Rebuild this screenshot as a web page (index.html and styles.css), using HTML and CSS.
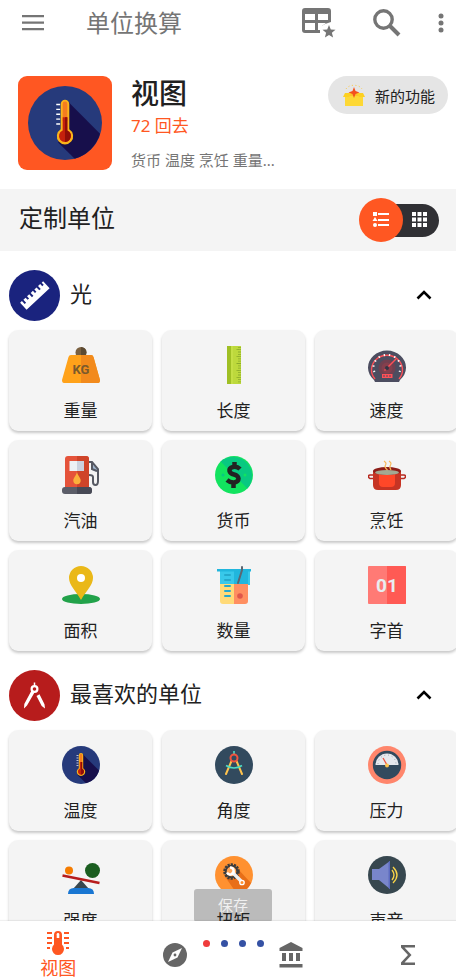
FILE: index.html
```html
<!DOCTYPE html>
<html lang="zh-CN">

<head>
  <meta charset="UTF-8">
  <meta name="viewport" content="width=device-width, initial-scale=1.0">
  <title>单位换算</title>
  <link rel="stylesheet" href="styles.css">
</head>

<body>

  <div class="app">
    <header class="topbar">
      <button class="icon-btn menu-btn" aria-label="菜单">
        <svg width="22" height="16" viewBox="0 0 22 16" fill="#757575"><path d="M0 0h22v2.300H0zM0 6.500h22v2.300H0zM0 13h22v2.300H0z"/></svg>
      </button>
      <h1>单位换算</h1>
      <button class="icon-btn" aria-label="收藏表格">
        <svg width="34" height="32" viewBox="0 0 34 32">
          <path fill="#757575" fill-rule="evenodd" d="M3 1h23a3 3 0 0 1 3 3v11l-6 2-5 3v6H3a3 3 0 0 1-3-3V4a3 3 0 0 1 3-3zM3 7v6h10V7zM16 7v6h10V7zM3 16v7h10v-7z"/>
          <path fill="#fff" d="M16 16h8l-4 3-1 4h-3z"/>
          <path fill="#757575" d="M27 18l1.800 4.500 4.700.3-3.600 3 1.200 4.700-4.100-2.600-4.100 2.600 1.200-4.700-3.600-3 4.700-.3z"/>
        </svg>
      </button>
      <button class="icon-btn" aria-label="搜索">
        <svg width="28" height="28" viewBox="0 0 28 28" fill="none" stroke="#757575"><circle cx="10.500" cy="10.500" r="8.700" stroke-width="3.400"/><path d="M17 17l9 9" stroke-width="4"/></svg>
      </button>
      <button class="icon-btn" aria-label="更多">
        <svg width="6" height="22" viewBox="0 0 6 22" fill="#757575"><circle cx="3" cy="4" r="2.500"/><circle cx="3" cy="11" r="2.500"/><circle cx="3" cy="18" r="2.500"/></svg>
      </button>
    </header>

    <main class="content">
      <section class="hero">
        <div class="hero-icon">
          <svg width="74" height="74" viewBox="0 0 38 38"><use href="#thermo"/></svg>
        </div>
        <div class="hero-text">
          <h2>视图</h2>
          <p class="count">72 回去</p>
          <p class="summary">货币 温度 烹饪 重量...</p>
        </div>
        <button class="new-btn">
          <svg width="22" height="22" viewBox="0 0 22 22">
            <path fill="#fdd835" d="M2 9h18v13H2z"/><path fill="#fbc02d" d="M2 9h18l-2 3H4z"/>
            <path fill="#fdd020" d="M2 9l-2 4h6l3-4zM20 9l2 4h-6l-3-4z"/>
            <path fill="#f4511e" d="M11 3l1.500 4 4 1.500-4 1.500-1.500 4-1.500-4-4-1.500 4-1.500z"/>
            <path stroke="#f9c846" stroke-dasharray="1 2.500" fill="none" d="M3 5c3-5 13-5 16 0"/>
          </svg>
          新的功能
        </button>
      </section>

      <section class="custom">
        <h2>定制单位</h2>
        <div class="toggle">
          <button class="toggle-list" aria-label="列表">
            <svg width="18" height="16" viewBox="0 0 18 16" fill="#fff"><path d="M1 0h4v4H1zM6 1h11v2H6zM6 7h11v2H6zM6 12h11v2H6zM3 5l2.500 4h-5z"/><circle cx="3" cy="13" r="2"/></svg>
          </button>
          <button class="toggle-grid" aria-label="网格">
            <svg width="16" height="16" viewBox="0 0 16 16" fill="#fff"><path d="M0 0h4v4H0zM5.500 0h4v4h-4zM11 0h4v4h-4zM0 5.500h4v4H0zM5.500 5.500h4v4h-4zM11 5.500h4v4h-4zM0 11h4v4H0zM5.500 11h4v4h-4zM11 11h4v4h-4z"/></svg>
          </button>
        </div>
      </section>

      <!-- 光 -->
      <section class="group">
        <div class="group-head">
          <svg class="group-icon" viewBox="0 0 51 51">
            <circle cx="25.500" cy="25.500" r="25.500" fill="#1a237e"/>
            <g transform="rotate(-43 25.500 25.500)"><path fill="#fff" d="M10 21h2.500v4h2v-4h3v3h2v-3h3v4h2v-4h3v3h2v-3h3v4h2v-4h3v3h2v-3h2v9.500H10z"/></g>
          </svg>
          <h3>光</h3>
          <button class="icon-btn" aria-label="收起">
            <svg width="16" height="12" viewBox="0 0 16 12" fill="none" stroke="#000" stroke-width="2.600"><path d="M1.500 8.500L8 2l6.500 6.500"/></svg>
          </button>
        </div>
        <div class="cards">
          <button class="card">
            <svg viewBox="0 0 38 38">
              <circle cx="19" cy="6.500" r="5.500" fill="#7a6040"/><path fill="#5c4a32" d="M19 1a5.500 5.500 0 0 1 0 11z"/>
              <path fill="#ffa21a" d="M9 9h20q2 0 2.500 2L38 34q0 3-2 3H2q-2 0-2-3L6.500 11Q7 9 9 9z"/>
              <path fill="#f28a1c" d="M19 9h10q2 0 2.500 2L38 34q0 3-2 3H19z"/>
              <text class="kg" x="19" y="28">KG</text>
            </svg>
            <span>重量</span>
          </button>
          <button class="card">
            <svg viewBox="0 0 38 38">
              <path fill="#bdd93c" d="M12 0h14v38H12z"/><path fill="#9fbf24" d="M12 0h4v38h-4z"/><path fill="#c5df46" d="M16 0h2v38h-2z"/>
              <path stroke="#8bab2a" stroke-width="3" stroke-dasharray=".8 1.500" d="M24.500 1v36"/>
              <path stroke="#8bab2a" stroke-width="2" stroke-dasharray=".8 6.100" d="M22.500 3.300v34"/>
            </svg>
            <span>长度</span>
          </button>
          <button class="card">
            <svg viewBox="0 0 38 38">
              <path fill="#4c4d60" d="M6 34A19 17 0 1 1 32 34L31 36H7z"/>
              <path fill="none" stroke="#ff5057" stroke-width="1.400" d="M7 33A15.500 14.500 0 1 1 31 33"/>
              <path fill="none" stroke="#fff" stroke-width="2" stroke-dasharray="1.400 4" d="M6.500 26A13.500 12.500 0 1 1 31.500 26"/>
              <circle cx="19" cy="22" r="8.500" fill="#704050"/><circle cx="19" cy="22" r="5.500" fill="#853f4d"/>
              <path stroke="#ff5057" stroke-width="1.500" d="M16.500 24.500L28 13"/><circle cx="19" cy="22" r="2" fill="#333544"/>
              <path fill="#ff5057" d="M14 28h10.500v4H14z"/><path stroke="#4c4d60" d="M16 29v2M19 29v2M22 29v2"/>
            </svg>
            <span>速度</span>
          </button>
          <button class="card">
            <svg viewBox="0 0 38 38">
              <path fill="#e5533a" d="M3 32V3q0-3 3-3h18q3 0 3 3v29z"/><path fill="#cf4429" d="M15 0h9q3 0 3 3v29H15z"/>
              <path fill="#edf1f5" d="M7.500 5H22v10H7.500z"/><path fill="#cbd2df" d="M15 5h7v10h-7z"/>
              <path fill="#fbb03b" d="M15 16c1 4 3.700 6 3.700 8.500a3.700 3.700 0 0 1-7.400 0C11.300 22 14 20 15 16z"/>
              <rect y="31" width="30" height="7" rx="3" fill="#5b5d68"/><path fill="#474955" d="M15 31h12q3 0 3 3.500T27 38H15z"/>
              <path fill="#9fb4cc" d="M30 8l5 4v4l-5-2z"/>
              <path fill="none" stroke="#565963" stroke-width="2" d="M27 6h3l6 7v12q0 4-2.500 4T31 26v-5q0-2-4-2M30 7v6l5 2"/>
            </svg>
            <span>汽油</span>
          </button>
          <button class="card">
            <svg viewBox="0 0 38 38">
              <circle cx="19" cy="19" r="19" fill="#12e35f"/><path fill="#08c981" d="M5.600 5.600A19 19 0 0 1 32.400 32.400z"/>
              <circle cx="8" cy="19" r="1.500" fill="#08c981"/><circle cx="30" cy="19" r="1.500" fill="#12e35f"/>
              <path stroke="#222" stroke-width="4.500" fill="none" d="M25 13q-3-3-7-2-4 1-3.500 4 .5 2.500 4.500 3.500t4.500 4q0 3-4 4-4 .5-7.500-2.500M19.500 6v6M18.500 26v6"/>
            </svg>
            <span>货币</span>
          </button>
          <button class="card">
            <svg viewBox="0 0 38 38">
              <path fill="none" stroke="#b62a20" stroke-width="1.500" d="M6 19H2q-1.500 0-1.500 1.500T2 22.500h4M32 19h4q1.500 0 1.500 1.500T36 22.500h-4"/>
              <path fill="#c63424" d="M5 15h28v14q0 5-5 5H10q-5 0-5-5z"/><path fill="#ff4728" d="M11 18h16v9q0 4-4 4h-8q-4 0-4-4z"/>
              <ellipse cx="19" cy="15" rx="14" ry="4" fill="#8c1d17"/><ellipse cx="19" cy="16.500" rx="12" ry="2.500" fill="#a3a992"/>
              <path fill="none" stroke="#f9b858" stroke-width="1.200" d="M16 5q3 2 1.500 4t2 5M21 5q3 2 1.500 4t.5 5"/>
            </svg>
            <span>烹饪</span>
          </button>
          <button class="card">
            <svg viewBox="0 0 38 38">
              <ellipse cx="19" cy="33" rx="19" ry="5" fill="#22a24a"/>
              <path fill="#eab818" d="M19 34C14 25 7 19 7 12a12 12 0 0 1 24 0c0 7-7 13-12 22z"/>
              <circle cx="19" cy="12" r="4" fill="#fff"/>
            </svg>
            <span>面积</span>
          </button>
          <button class="card">
            <svg viewBox="0 0 38 38">
              <path fill="#38c8ea" d="M3 3h32v16H5V5H3z"/><path fill="#21b6dd" d="M19 3h14v16H19z"/><path fill="#21b6dd" d="M2 3h34v2.500H2z"/>
              <path fill="#ffda78" d="M5 18h14v20H8q-3 0-3-3z"/><path fill="#ff8f61" d="M19 18h14v17q0 3-3 3H19z"/>
              <path stroke="#25a9cc" stroke-width="2" stroke-linecap="round" d="M10 9h5M10 14h5M10 20h5M10 25h5M10 30h5"/>
              <path stroke="#5c6672" stroke-width="2" stroke-linecap="round" fill="none" d="M27 1v3l-4 13"/><circle cx="25" cy="30" r="2.800" fill="#e0574a"/>
            </svg>
            <span>数量</span>
          </button>
          <button class="card">
            <svg viewBox="0 0 38 38">
              <rect width="38" height="38" rx="1" fill="#ff7a75"/><path fill="#ff5a54" d="M19 0h18q1 0 1 1v36q0 1-1 1H19z"/>
              <text class="zero-one" x="19" y="26">01</text>
            </svg>
            <span>字首</span>
          </button>
        </div>
      </section>

      <!-- 最喜欢的单位 -->
      <section class="group">
        <div class="group-head">
          <svg class="group-icon" viewBox="0 0 51 51">
            <circle cx="25.500" cy="25.500" r="25.500" fill="#b71c1c"/>
            <circle cx="25.500" cy="19" r="2.900" fill="none" stroke="#fff" stroke-width="2.200"/>
            <path stroke="#fff" stroke-width="1.500" d="M25.500 12.500v4"/>
            <path fill="#fff" d="M22.500 20.500l3 2-7.500 13-3 3 .3-4.500zM27.500 26l3-1.700 5 10 .5 4.200-3.300-2.500z"/>
          </svg>
          <h3>最喜欢的单位</h3>
          <button class="icon-btn" aria-label="收起">
            <svg width="16" height="12" viewBox="0 0 16 12" fill="none" stroke="#000" stroke-width="2.600"><path d="M1.500 8.500L8 2l6.500 6.500"/></svg>
          </button>
        </div>
        <div class="cards">
          <button class="card">
            <svg viewBox="0 0 38 38">
              <g id="thermo">
                <circle cx="19" cy="19" r="19" fill="#263a7b"/>
                <path fill="#170f4b" d="M20.500 8L37 24.500A19 19 0 0 1 24 37.300L15.500 29z"/>
                <path stroke="#fff" stroke-width=".7" d="M14.500 9.500h2M14.500 12h2M14.500 14.500h2M14.500 17h2M14.500 19.500h2"/>
                <path fill="#fbb41a" d="M19 7a2.200 2.200 0 0 1 2.200 2.200v13a4.200 4.200 0 1 1-4.400 0v-13A2.200 2.200 0 0 1 19 7z"/>
                <path fill="#f47c20" d="M19 8a1.200 1.200 0 0 1 1.200 1.200V18h-2.400V9.200A1.200 1.200 0 0 1 19 8z"/>
                <path fill="#c4200c" d="M17.800 16h2.400v6.800a3.100 3.100 0 1 1-2.400 0z"/>
                <path fill="#8f0d08" d="M19 16h1.200v6.800A3.100 3.100 0 0 1 19 28.700z"/>
              </g>
            </svg>
            <span>温度</span>
          </button>
          <button class="card">
            <svg viewBox="0 0 38 38">
              <circle cx="19" cy="19" r="19" fill="#324a5e"/>
              <path stroke="#ffc34d" stroke-width="2" stroke-linecap="round" d="M16.500 15L11 28M21.500 15L27 28"/>
              <path fill="none" stroke="#4cdbc4" stroke-width="1.600" d="M11 19.500q8 5 16 0M19 5v4"/>
              <circle cx="19" cy="12" r="3.500" fill="#324a5e" stroke="#f1543f" stroke-width="2"/>
            </svg>
            <span>角度</span>
          </button>
          <button class="card">
            <svg viewBox="0 0 38 38">
              <circle cx="19" cy="19" r="19" fill="#ff866c"/><circle cx="19" cy="19" r="14.200" fill="#324a5e"/>
              <path fill="#e6e9ee" d="M7.500 19a11.500 11.500 0 0 1 23 0z"/>
              <path fill="none" stroke="#8c96a3" stroke-dasharray=".8 3" d="M10 18a9 9 0 0 1 18 0"/>
              <path stroke="#f1543f" stroke-width="1.300" d="M19 19l-4-7"/><circle cx="19" cy="19.500" r="2" fill="#ffc34d"/>
            </svg>
            <span>压力</span>
          </button>
          <button class="card">
            <svg viewBox="0 0 38 38">
              <circle cx="7" cy="14.500" r="4" fill="#f57c00"/><circle cx="30.500" cy="14.500" r="7.500" fill="#1b5e20"/>
              <path fill="#37474f" d="M19 24l8 9H11z"/><path stroke="#b71c1c" stroke-width="2.600" d="M.5 19.500L37.500 27"/>
              <path fill="#1976d2" d="M6 38q0-6 6-6h14q6 0 6 6z"/>
            </svg>
            <span>强度</span>
          </button>
          <button class="card">
            <svg viewBox="0 0 38 38">
              <circle cx="19" cy="19" r="19" fill="#ff9130"/><path fill="#e86f18" d="M22 12l14 15A19 19 0 0 1 22 38L11 22z"/>
              <circle cx="16.500" cy="15.500" r="7" fill="#ffa65a" stroke="#3c3c3c" stroke-width="2.500" stroke-dasharray="2.200 1"/>
              <circle cx="16.500" cy="15.500" r="5.800" fill="none" stroke="#3c3c3c" stroke-width="2"/>
              <path stroke="#eceff1" stroke-width="3.400" d="M17 16l9 9"/>
              <path fill="none" stroke="#fff" stroke-width="2.500" d="M15 11.500a3.500 3.500 0 1 1-3 5"/>
              <circle cx="27" cy="26.500" r="2.200" fill="#ff9130" stroke="#fff" stroke-width="1.300"/>
            </svg>
            <span>扭矩</span>
          </button>
          <button class="card">
            <svg viewBox="0 0 38 38">
              <circle cx="19" cy="19" r="19" fill="#37474f"/>
              <path fill="#7986cb" d="M4 13h7L22 5v28l-11-9H4z"/><path fill="#5c6bc0" d="M20.500 6L22 5v28l-1.500-1z"/>
              <path fill="none" stroke="#fbd548" stroke-width="1.300" d="M24 14q4 5 0 10M25 11q8 8 0 16"/>
            </svg>
            <span>声音</span>
          </button>
        </div>
      </section>
    </main>

    <div class="toast">保存</div>

    <nav class="tabs">
      <button class="tab active">
        <svg width="24" height="26" viewBox="0 0 24 26" fill="#ff5722">
          <path d="M1 2h5v2H1zM1 7h5v2H1zM1 12h5v2H1zM1 17h3v2H1zM18 2h5v2h-5zM18 7h5v2h-5zM18 12h5v2h-5zM20 17h3v2h-3z"/>
          <path d="M12 1a4 4 0 0 1 4 4v9.500a6 6 0 1 1-8 0V5a4 4 0 0 1 4-4z"/>
          <path fill="#fff" d="M12 3a1.300 1.300 0 0 1 1.300 1.300V8h-2.600V4.300A1.300 1.300 0 0 1 12 3z"/>
        </svg>
        <span>视图</span>
      </button>
      <button class="tab" aria-label="探索">
        <svg width="24" height="24" viewBox="0 0 24 24"><circle cx="12" cy="12" r="12" fill="#666"/><path fill="#fff" d="M19 5l-4.500 9.500L5 19l4.500-9.500z"/><circle cx="12" cy="12" r="1.400" fill="#666"/></svg>
      </button>
      <button class="tab" aria-label="金融">
        <svg width="24" height="26" viewBox="0 0 24 26" fill="#666"><path d="M12 0l11.500 6v3H.5V6zM3 11h4v8H3zM10 11h4v8h-4zM17 11h4v8h-4zM.5 22h23v3.500H.5z"/></svg>
      </button>
      <button class="tab" aria-label="求和">
        <svg width="16" height="20" viewBox="0 0 16 20"><path fill="#666" d="M1 0h14v2.500H4.500l7 7.500-7 7.500H15V20H1v-2.500L8 10 1 2.500z"/></svg>
      </button>
      <div class="pager"><i class="on"></i><i></i><i></i><i></i></div>
    </nav>
  </div>

</body>

</html>
```
FILE: styles.css
```css
* {
  box-sizing: border-box;
}

body {
  margin: 0;
  font-family: "Noto Sans", "Noto Sans CJK SC", sans-serif;
  background: #fff;
  color: #212121;
}

h1,
h2,
h3,
p {
  margin: 0;
  font-weight: normal;
}

button {
  padding: 0;
  border: none;
  background: none;
  font-family: inherit;
  color: inherit;
  cursor: pointer;
}

svg {
  display: block;
}

.app {
  position: relative;
  display: flex;
  flex-direction: column;
  height: 100vh;
  overflow: hidden;
}

/* top bar */
.topbar {
  display: flex;
  align-items: center;
  flex: none;
  height: 46px;
  padding: 0 12px 0 22px;
  gap: 37px;
}

.topbar h1 {
  flex: 1;
  margin-left: 5px;
  font-size: 24px;
  line-height: 36px;
  color: #757575;
}

.icon-btn {
  flex: none;
}

.content {
  flex: 1;
  min-height: 0;
  overflow: hidden;
}

/* hero */
.hero {
  display: flex;
  align-items: flex-start;
  padding: 30px 8px 11px 18px;
}

.hero-icon {
  display: flex;
  align-items: center;
  justify-content: center;
  width: 94px;
  height: 94px;
  border-radius: 9px;
  background: #ff5722;
}

.hero-text {
  flex: 1;
  margin-left: 19px;
}

.hero-text h2 {
  font-size: 28px;
  font-weight: 500;
  line-height: 34px;
}

.count {
  font-size: 17px;
  line-height: 32px;
  color: #ff5722;
}

.summary {
  font-size: 15px;
  line-height: 36px;
  color: #757575;
  white-space: nowrap;
}

.new-btn {
  display: flex;
  align-items: center;
  gap: 10px;
  height: 38px;
  padding: 0 13px 0 15px;
  border-radius: 19px;
  background: #e5e5e5;
  font-size: 15px;
}

.custom {
  display: flex;
  align-items: center;
  justify-content: space-between;
  height: 62px;
  padding: 0 17px 0 19px;
  background: #f4f4f4;
}

.custom h2 {
  padding-bottom: 4px;
  font-size: 24px;
  line-height: 36px;
}

.toggle {
  display: flex;
  align-items: center;
}

.toggle-list,
.toggle-grid {
  display: flex;
  align-items: center;
  justify-content: center;
}

.toggle-list {
  position: relative;
  width: 44px;
  height: 44px;
  border-radius: 50%;
  background: #ff5722;
}

.toggle-grid {
  width: 58px;
  height: 33px;
  margin-left: -22px;
  padding-left: 20px;
  border-radius: 0 17px 17px 0;
  background: #303034;
}

/* unit groups */
.group {
  padding: 19px 0 0 9px;
}

.group-head {
  display: flex;
  align-items: center;
  gap: 10px;
  padding-right: 24px;
}

.group-icon {
  width: 51px;
  height: 51px;
}

.group-head h3 {
  flex: 1;
  padding-bottom: 5px;
  font-size: 22px;
  line-height: 32px;
}

.cards {
  display: grid;
  grid-template-columns: repeat(3, 1fr);
  gap: 9px 10px;
  margin: 9px -2px 0 0;
}

.card {
  display: flex;
  flex-direction: column;
  align-items: center;
  gap: 15px;
  height: 101px;
  padding-top: 16px;
  border-radius: 9px;
  background: #f4f4f4;
  box-shadow: 0 2px 3px rgba(0, 0, 0, 0.22);
  font-size: 17px;
  line-height: 24px;
}

.card svg {
  width: 38px;
  height: 38px;
}

.card span {
  position: relative;
  z-index: 2;
}

.kg,
.zero-one {
  font-family: Roboto, sans-serif;
  font-weight: bold;
  text-anchor: middle;
}

.kg {
  font-size: 13px;
  fill: #7a5a2c;
}

.zero-one {
  font-size: 19px;
  fill: #e8edf0;
}

.toast {
  position: absolute;
  left: 50%;
  bottom: 58px;
  z-index: 1;
  width: 78px;
  margin-left: -34px;
  border-radius: 3px;
  background: #bbb;
  color: #f0f0f0;
  font-size: 15px;
  line-height: 33px;
  text-align: center;
}

/* bottom tabs */
.tabs {
  position: relative;
  z-index: 3;
  display: grid;
  grid-template-columns: repeat(4, 1fr);
  flex: none;
  height: 59px;
  margin-right: -10px;
  background: #fff;
  box-shadow: 0 -1px 1px rgba(0, 0, 0, 0.06);
}

.tab {
  display: flex;
  flex-direction: column;
  align-items: center;
  justify-content: center;
  padding-top: 8px;
}

.tab.active {
  color: #ff5722;
  font-size: 18px;
  line-height: 24px;
}

.pager {
  position: absolute;
  top: 19px;
  left: 50%;
  display: flex;
  gap: 11px;
  margin-left: -30px;
}

.pager i {
  width: 7px;
  height: 7px;
  border-radius: 50%;
  background: #3551a4;
}

.pager .on {
  background: #ef3c3c;
}
```
